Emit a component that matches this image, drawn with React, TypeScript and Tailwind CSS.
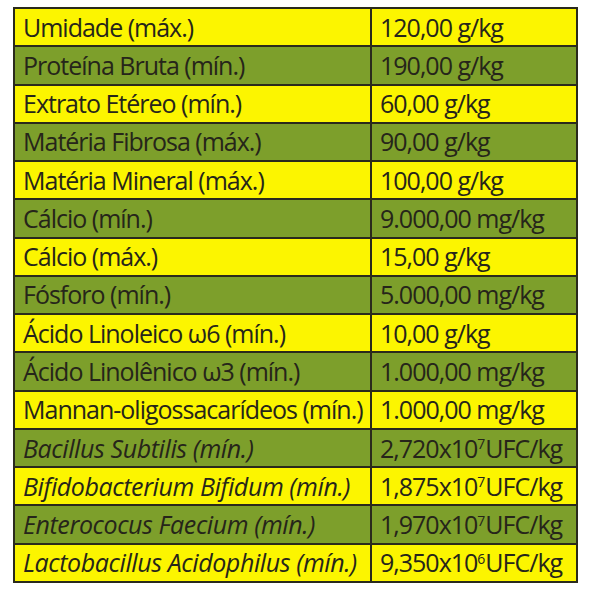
import React from "react";

type Row = { label: React.ReactNode; value: React.ReactNode; italic?: boolean };

const Sup = ({ children }: { children: React.ReactNode }) => (
  <sup className="text-[14px] top-[-0.6em] mr-[1px]">{children}</sup>
);

const rows: Row[] = [
  { label: "Umidade (máx.)", value: "120,00 g/kg" },
  { label: "Proteína Bruta (mín.)", value: "190,00 g/kg" },
  { label: "Extrato Etéreo (mín.)", value: "60,00 g/kg" },
  { label: "Matéria Fibrosa (máx.)", value: "90,00 g/kg" },
  { label: "Matéria Mineral (máx.)", value: "100,00 g/kg" },
  { label: "Cálcio (mín.)", value: "9.000,00 mg/kg" },
  { label: "Cálcio (máx.)", value: "15,00 g/kg" },
  { label: "Fósforo (mín.)", value: "5.000,00 mg/kg" },
  { label: "Ácido Linoleico ω6 (mín.)", value: "10,00 g/kg" },
  { label: "Ácido Linolênico ω3 (mín.)", value: "1.000,00 mg/kg" },
  { label: "Mannan-oligossacarídeos (mín.)", value: "1.000,00 mg/kg" },
  { label: "Bacillus Subtilis (mín.)", value: <>2,720x10<Sup>7</Sup>UFC/kg</>, italic: true },
  { label: "Bifidobacterium Bifidum (mín.)", value: <>1,875x10<Sup>7</Sup>UFC/kg</>, italic: true },
  { label: "Enterococus Faecium (mín.)", value: <>1,970x10<Sup>7</Sup>UFC/kg</>, italic: true },
  { label: "Lactobacillus Acidophilus (mín.)", value: <>9,350x10<Sup>6</Sup>UFC/kg</>, italic: true },
];

export default function App() {
  return (
    <div className="w-[600px] h-[600px] bg-white pt-[7px] pl-[13px]" style={{ fontFamily: '"Open Sans", sans-serif' }}>
      <div className="w-[565px] h-[576px] border-2 border-[#2a2a1c] flex flex-col">
        {rows.map((r, i) => (
          <div
            key={i}
            className={`grid grid-cols-[357px_1fr] flex-1 ${i > 0 ? "border-t-2 border-[#2a2a1c]" : ""} ${
              i % 2 === 0 ? "bg-[#fcf500]" : "bg-[#7d9f2b]"
            }`}
          >
            <div
              className={`flex items-center pl-[8px] text-[25px] text-[#26251a] whitespace-nowrap border-r-2 border-[#2a2a1c] ${
                r.italic ? "italic tracking-[-0.4px]" : "tracking-[-1px]"
              }`}
            >
              <span className="leading-none">{r.label}</span>
            </div>
            <div className="flex items-center pl-[8px] text-[25px] tracking-[-1px] text-[#26251a] whitespace-nowrap">
              <span className="leading-none">{r.value}</span>
            </div>
          </div>
        ))}
      </div>
    </div>
  );
}
